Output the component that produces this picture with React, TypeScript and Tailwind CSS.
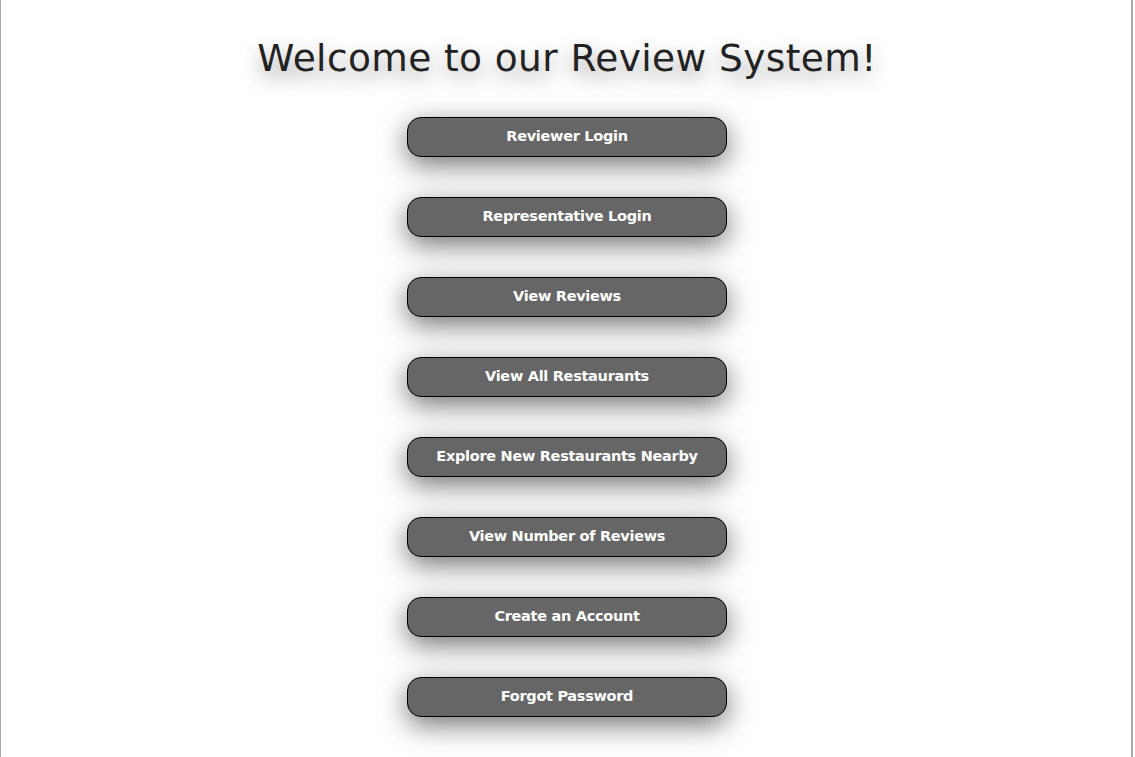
const options = [
  "Reviewer Login",
  "Representative Login",
  "View Reviews",
  "View All Restaurants",
  "Explore New Restaurants Nearby",
  "View Number of Reviews",
  "Create an Account",
  "Forgot Password",
];

export default function App() {
  return (
    <div className="min-h-[757px] w-[1133px] bg-white border-l border-r-2 border-[#ababab] font-['DejaVu_Sans',sans-serif]">
      <div className="flex flex-col items-center pt-[34px] pl-[2px]">
        <h1 className="text-[37.5px] leading-[48px] text-[#222] tracking-[0.4px] [text-shadow:0_8px_20px_rgba(0,0,0,0.4)]">
          Welcome to our Review System!
        </h1>
        <div className="flex flex-col items-center gap-10 mt-[35px]">
          {options.map((label) => (
            <button
              key={label}
              className="w-[320px] h-10 pb-px rounded-[14px] border border-black bg-[#666] text-white font-bold text-[14.5px] tracking-[-0.3px] shadow-[0_8px_28px_rgba(0,0,0,0.55)]"
            >
              {label}
            </button>
          ))}
        </div>
      </div>
    </div>
  );
}
